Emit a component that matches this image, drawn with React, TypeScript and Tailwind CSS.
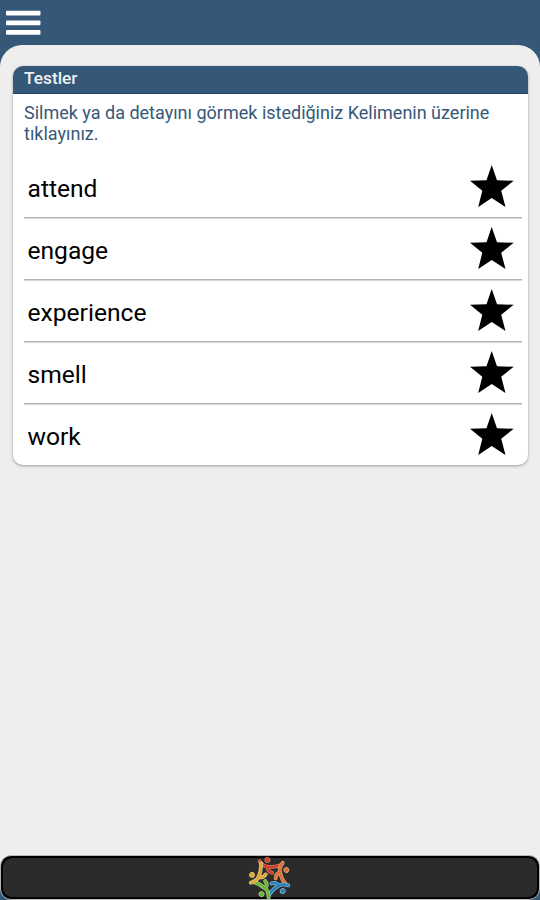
const words = ["attend", "engage", "experience", "smell", "work"];

function MenuIcon() {
  return (
    <svg className="h-[26px] w-9" viewBox="0 0 36 26" fill="#fff">
      <rect x="0" y="0.8" width="34.5" height="4.8" rx="1" />
      <rect x="0" y="10.4" width="34.5" height="4.8" rx="1" />
      <rect x="0" y="20" width="34.5" height="4.8" rx="1" />
    </svg>
  );
}

function StarIcon() {
  return (
    <svg className="mb-0.5 h-[42px] w-11 shrink-0" viewBox="0 0 44 42">
      <path
        d="M21.7 0L27 15.2L43.7 15.8L31.2 25.8L35.5 42L21.7 33L8.2 42L12.3 25.8L0 15.8L16.5 15.2Z"
        fill="#000"
      />
    </svg>
  );
}

const figures = [
  { angle: 0, color: "#cf3c2b", edge: "#d99a80" },
  { angle: 72, color: "#df6f38", edge: "#e6b98a" },
  { angle: 144, color: "#2781bd", edge: "#9cc8dc" },
  { angle: 216, color: "#67b538", edge: "#bdd88c" },
  { angle: 288, color: "#dfa436", edge: "#ead792" },
];

const limbs = "M12 6Q16 11.5 20 11.2Q26.5 12 32.5 9.5M20 11.2Q19.2 15.6 24 17";

function SwirlLogo() {
  return (
    <svg className="h-[42px] w-[44px]" viewBox="1 2 42 40">
      {figures.map(({ angle, color, edge }) => (
        <g
          key={angle}
          transform={`rotate(${angle} 22 22)`}
          fill="none"
          strokeLinecap="round"
          strokeLinejoin="round"
        >
          <path d={limbs} stroke={edge} strokeWidth="3.6" />
          <path d={limbs} stroke={color} strokeWidth="2.5" />
          <circle cx="19.5" cy="4.8" r="2.5" fill={color} stroke={edge} strokeWidth="0.6" />
        </g>
      ))}
    </svg>
  );
}

export default function App() {
  return (
    <div className="flex h-[900px] w-[540px] flex-col overflow-hidden bg-[#365878] font-['Roboto',sans-serif]">
      <header className="flex h-[45px] shrink-0 items-start pt-2.5 pl-1.5">
        <MenuIcon />
      </header>

      <main className="flex min-h-0 flex-1 flex-col rounded-t-[22px] bg-[#eee]">
        <section className="mr-3 ml-[12.5px] mt-[21px] h-[399px] overflow-hidden rounded-[10px] bg-white shadow-[0_1px_3px_rgba(0,0,0,0.35)]">
          <h1 className="h-7 border-b border-[#1f456a] bg-[#365878] pl-[11.5px] text-[17.3px] leading-[25px] font-medium text-[#eef2f5]">
            Testler
          </h1>
          <p className="h-[62px] pt-2 pl-[11.5px] text-[18px] leading-[21px] text-[#365878]">
            Silmek ya da detayını görmek istediğiniz Kelimenin üzerine
            <br />
            tıklayınız.
          </p>
          <ul className="mr-1.5 ml-[11.5px]">
            {words.map((word) => (
              <li
                key={word}
                className="flex h-[62px] items-center justify-between border-b border-[#aeb3ba] pt-px pr-2 pl-[3.5px] shadow-[0_1px_0_#d5d8dc] last:border-transparent last:shadow-none"
              >
                <span className="pt-1 text-[24.6px] leading-8 text-black">{word}</span>
                <StarIcon />
              </li>
            ))}
          </ul>
        </section>

        {/* Bottom bar */}
        <footer className="mt-auto flex h-[46px] shrink-0 bg-[linear-gradient(#eee_50%,#365878_50%)]">
          <div className="mt-px flex h-[45px] flex-1 items-center justify-center rounded-[11px] border border-[#b5b7b9] bg-black p-0.5">
            <div className="flex h-full flex-1 items-center justify-center rounded-[9px] bg-[#2b2b2b]">
              <SwirlLogo />
            </div>
          </div>
        </footer>
      </main>
    </div>
  );
}
